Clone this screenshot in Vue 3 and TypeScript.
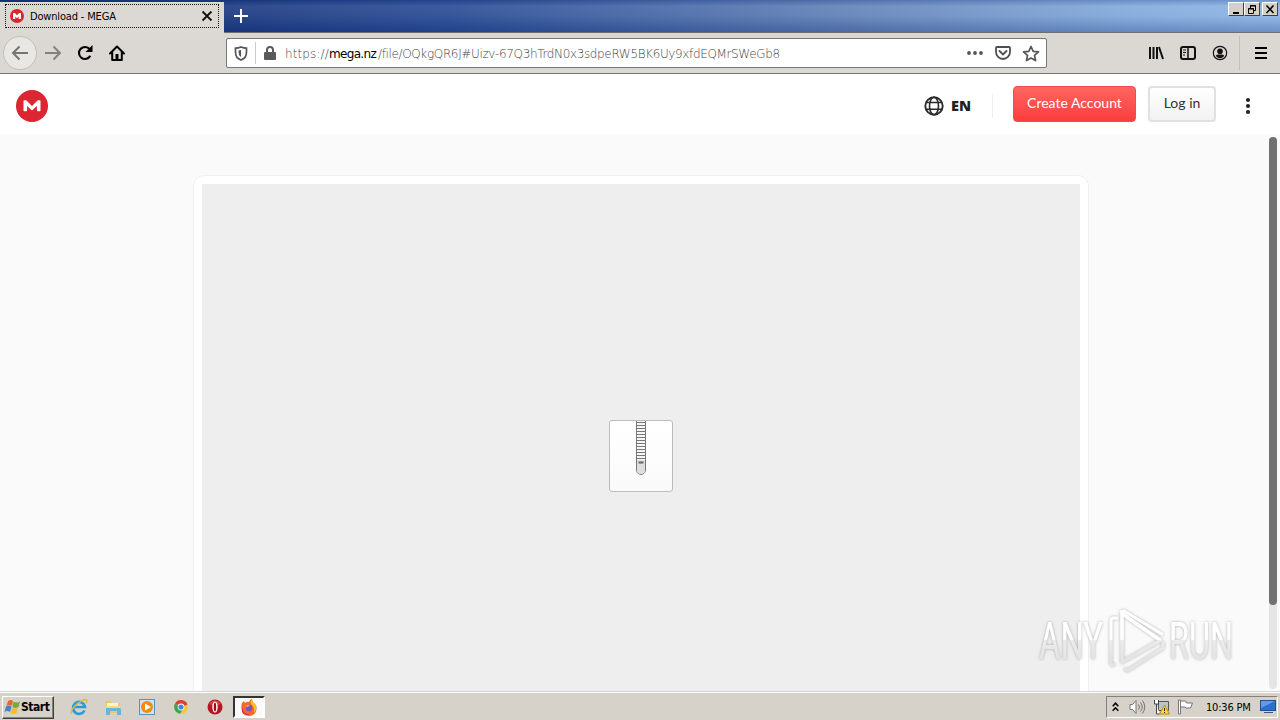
<script setup lang="ts">
const rungs: number[] = Array.from({ length: 13 }, (_, i) => 3 + i * 3)
</script>

<template>
  <div class="screen">
    <div class="titlebar">
      <div class="tab">
        <div class="tab-focus">
          <svg class="tab-logo" viewBox="0 0 32 32"><circle cx="16" cy="16" r="16" fill="#d9272e" /><path d="M7 23V9h4l5 5 5-5h4v14h-5v-6l-4 4-4-4v6z" fill="#fff" /></svg>
          <span class="tab-title">Download - MEGA</span>
          <svg class="tab-close" width="12" height="12" viewBox="0 0 12 12"><path d="M1.5 1.5l9 9M10.5 1.5l-9 9" stroke="#111" stroke-width="1.8" /></svg>
        </div>
      </div>
      <svg class="plus" width="16" height="16" viewBox="0 0 16 16"><path d="M8 1v14M1 8h14" stroke="#fff" stroke-width="2" /></svg>
      <div class="winbtns">
        <div class="winbtn"><svg width="12" height="11"><path d="M3 8h6v2H3z" /></svg></div>
        <div class="winbtn"><svg width="12" height="11"><path d="M4.5 4V1.5h5v5H8M4 2h6M2.5 4.5h5v5h-5zM2 5h6" fill="none" stroke="#000" /></svg></div>
        <div class="winbtn last"><svg width="12" height="11"><path d="M2.5 1.5l7 7.5M9.500 1.500l-7 7.500" stroke="#000" stroke-width="1.6" /></svg></div>
      </div>
    </div>

    <div class="toolbar">
      <div class="back"><svg width="18" height="16" viewBox="0 0 18 16"><path d="M17 8H2M8.500 1.500L2 8l6.500 6.500" fill="none" stroke="#77756f" stroke-width="2" /></svg></div>
      <svg class="fwd" width="18" height="16" viewBox="0 0 18 16"><path d="M1 8h15M9.500 1.500L16 8l-6.500 6.500" fill="none" stroke="#83817c" stroke-width="2" /></svg>
      <svg class="reload" width="16" height="16" viewBox="0 0 16 16"><path d="M13.300 10.800A6 6 0 1 1 12.700 4.200" fill="none" stroke="#000" stroke-width="2.100" /><path d="M15.500 0v7H8.500z" /></svg>
      <svg class="home" width="16" height="16" viewBox="0 0 16 16"><path d="M1 8.500L8 1.500l7 7M3.200 7.500V15h9.600V7.500" fill="none" stroke="#000" stroke-width="2" stroke-linejoin="round" stroke-linecap="round" /><path d="M6.500 9h3v6h-3z" /></svg>
      <div class="urlbar">
        <svg class="shield" width="14" height="15" viewBox="0 0 14 15"><path d="M7 1C5 1.900 3 2.200 1.500 2.200V6c0 4 2 6.800 5.500 8 3.500-1.200 5.500-4 5.500-8V2.200C11 2.200 9 1.900 7 1z" fill="none" stroke="#555" stroke-width="1.700" /><path d="M7 4v7C5 10 4.500 8 4.500 4.500z" fill="#555" /></svg>
        <i class="url-sep"></i>
        <svg class="lock" width="12" height="14" viewBox="0 0 12 14"><path d="M3 7V4a3 3 0 0 1 6 0v3" fill="none" stroke="#5a5a5a" stroke-width="2" /><rect y="6" width="12" height="8" rx="1" fill="#5a5a5a" /></svg>
        <div class="url"><span class="u1">https://</span><span class="u2">mega.nz</span><span class="u3">/file/OQkgQR6J#Uizv-67Q3hTrdN0x3sdpeRW5BK6Uy9xfdEQMrSWeGb8</span></div>
        <svg class="dots" width="16" height="6" viewBox="0 0 16 6" fill="#555"><circle cx="2" cy="3" r="1.900" /><circle cx="8" cy="3" r="1.900" /><circle cx="14" cy="3" r="1.900" /></svg>
        <svg class="pocket" width="16" height="15" viewBox="0 0 16 15" fill="none" stroke="#4f4f4f"><path d="M2 1h12q1 0 1 1v4a7 7 0 0 1-14 0V2q0-1 1-1z" stroke-width="1.800" /><path d="M4.500 5L8 8.500 11.500 5" stroke-width="1.900" stroke-linecap="round" /></svg>
        <svg class="star" width="18" height="17" viewBox="0 0 18 17"><path d="M9 1.500l2.200 4.800 5.300.6-4 3.500 1.100 5.200L9 13l-4.600 2.600 1.100-5.200-4-3.500 5.300-.6z" fill="none" stroke="#555" stroke-width="1.700" stroke-linejoin="round" /></svg>
      </div>
      <div class="tools">
        <svg width="16" height="16" viewBox="0 0 16 16" fill="none" stroke="#111" stroke-width="2"><path d="M2 2v12M5.500 2v12M9 2v12M11 2l4 12" /></svg>
        <svg width="16" height="16" viewBox="0 0 16 16" fill="none" stroke="#111"><rect x="1" y="2" width="14" height="12" rx="2" stroke-width="2" /><path d="M8 2v12" stroke-width="1.500" /><path d="M3 5h3M3 7.500h3M3 10h2" /></svg>
        <svg width="16" height="16" viewBox="0 0 16 16"><circle cx="8" cy="8" r="6.700" fill="none" stroke="#111" stroke-width="1.200" /><circle cx="8" cy="6.200" r="2.800" fill="#111" /><path d="M3.800 10.800q1-1.500 2.700-1.300h3q1.700-.2 2.700 1.300a4.900 4.900 0 0 1-8.400 0z" fill="#111" /></svg>
      </div>
      <i class="tool-sep"></i>
      <svg class="burger" width="12" height="12"><path d="M0 1h12M0 6h12M0 11h12" stroke="#000" stroke-width="2" /></svg>
    </div>

    <header class="site-head">
      <svg class="mega" width="32" height="32" viewBox="0 0 32 32"><circle cx="16" cy="16" r="16" fill="#dc2631" /><path d="M7.500 20.500V11q0-.7.700-.7h2L16 16l5.800-5.700h2q.7 0 .7.700v9.500q0 .8-.7.800h-2.100q-.8 0-.8-.8v-4.600L16 20.600l-4.900-4.700v4.600q0 .8-.8.800H8.200q-.7 0-.7-.8z" fill="#fff" /></svg>
      <svg class="globe" width="20" height="20" viewBox="0 0 20 20" fill="none" stroke="#2b2b2b" stroke-width="1.600"><circle cx="10" cy="10" r="8.700" stroke-width="1.900" /><ellipse cx="10" cy="10" rx="4.500" ry="8.700" /><path d="M2.300 6.500h15.400M2.300 13.200h15.400" /></svg>
      <span class="lang">EN</span>
      <i class="head-sep"></i>
      <button class="btn create">Create Account</button>
      <button class="btn login">Log in</button>
      <svg class="more" width="6" height="18" fill="#222"><circle cx="3" cy="3" r="2.100" /><circle cx="3" cy="9" r="2.100" /><circle cx="3" cy="15" r="2.100" /></svg>
    </header>

    <main class="content">
      <div class="card">
        <div class="preview">
          <svg class="zip" width="64" height="72" viewBox="0 0 64 72">
            <defs><linearGradient id="paper" x2="0" y2="1"><stop stop-color="#fff" /><stop offset="1" stop-color="#fafafa" /></linearGradient></defs>
            <rect x=".5" y=".5" width="63" height="71" rx="2.500" fill="url(#paper)" stroke="#bcbcbc" />
            <path d="M27.500 1v49a4.500 4.500 0 0 0 9 0V1" fill="#f6f6f6" stroke="#777" />
            <path v-for="y in rungs" :key="y" :d="`M28 ${y - 0.5}h8`" stroke="#777" />
            <path d="M28 40h8v10a4 4 0 0 1-8 0z" fill="#dedede" />
            <path d="M29.500 41.500h5v2h-5z" fill="#666" />
          </svg>
        </div>
      </div>
      <div class="scroll"><div class="thumb"></div></div>
      <svg class="watermark" width="210" height="78" viewBox="0 0 210 78">
        <defs>
          <linearGradient id="shine" x1="0" y1="15" x2="0" y2="56" gradientUnits="userSpaceOnUse"><stop stop-color="#fff" /><stop offset=".57" stop-color="#fff" /><stop offset=".59" stop-color="#ececec" /><stop offset="1" stop-color="#e4e4e4" /></linearGradient>
          <filter id="soft" x="-10%" y="-10%" width="120%" height="120%"><feDropShadow dx="0" dy="0" stdDeviation="1.800" flood-color="#777" flood-opacity=".6" /></filter>
        </defs>
        <g filter="url(#soft)" fill="url(#shine)">
          <text x="5" y="58" textLength="64" lengthAdjust="spacingAndGlyphs">ANY</text>
          <text x="135" y="58" textLength="64" lengthAdjust="spacingAndGlyphs">RUN</text>
          <g fill="none" stroke="url(#shine)" stroke-linejoin="round" stroke-linecap="round"><path d="M88 12.500v48.500l38.500-21.500z" stroke-width="3.500" /><path d="M83 17h-3q-3 0-3 3v42q0 3 3 1.500M87 11l3-1 38 23M91 68q2 3 5 0l33-21v-5" stroke-width="3" /></g>
        </g>
      </svg>
    </main>

    <footer class="taskbar">
      <div class="start">
        <svg width="17" height="16" viewBox="0 0 17 16"><path d="M4 2q3-2 5 0L8 7Q5 5 2.500 7z" fill="#e66a27" /><path d="M9.500 2.500q3 2 6.500 0L14.500 8q-3 2-6 0z" fill="#6fae34" /><path d="M2 7.500q3-2 5.500 0L6 13q-3-2-5.500 0z" fill="#3d86ca" /><path d="M8 8.500q3 2 6 0l-1.500 5.500q-3 2-6 0z" fill="#f5bd2b" /></svg>
        <b>Start</b>
      </div>
      <div class="quick">
        <svg width="18" height="18" viewBox="0 0 18 18" fill="none"><path d="M14.500 12.500A6 6 0 1 1 15 9H4" stroke="#2b9bd6" stroke-width="2.600" /><path d="M2 16q-3-2 3-8T16 1.500q2 1 0 4" stroke="#e3b83b" stroke-width="1.300" /></svg>
        <svg width="18" height="18" viewBox="0 0 18 18"><path d="M2 3h5l1 2h8v10H2z" fill="#e8c964" /><path d="M3 5h11v5H3z" fill="#fff4bd" /><path d="M2 9h14l1 3v5h-4v-4H6v4H2z" fill="#69b6d8" /><path d="M2 8h14v2H2z" fill="#f6dd84" /></svg>
        <svg width="18" height="18" viewBox="0 0 18 18"><rect x="1.500" y="1.500" width="15" height="15" fill="#cfe3f3" stroke="#5792c4" /><circle cx="9" cy="9" r="6" fill="#f28a18" /><path d="M7 5.500v7l6-3.500z" fill="#fff" /></svg>
        <svg width="18" height="18" viewBox="0 0 18 18"><circle cx="9" cy="9" r="6.800" fill="#f4c830" /><path d="M9 9L3 5.500a7 7 0 0 1 12.500 1z" fill="#dd4032" /><path d="M9 9L3 5.500A7 7 0 0 0 8 15.700l3-4.700z" fill="#35a652" /><circle cx="9" cy="9" r="3.400" fill="#fff" /><circle cx="9" cy="9" r="2.600" fill="#4284e8" /></svg>
        <svg width="18" height="18" viewBox="0 0 18 18"><circle cx="9" cy="9" r="7.500" fill="#b61520" /><path d="M3 6a7 7 0 0 1 12 0q-6 3-12 0z" fill="#d53f47" /><ellipse cx="9" cy="9" rx="2.700" ry="5.500" fill="#fff" /><ellipse cx="9" cy="9" rx="1.200" ry="4.500" fill="#9d0d18" /></svg>
      </div>
      <div class="active-app"><svg width="18" height="18" viewBox="0 0 18 18"><path d="M2 5l2-2 1 2q2-2 4-1 1-3 3-3 0 3 3 5 2 2 1.500 5a7.500 7 0 0 1-15 0Q1 8 2 5z" fill="#f36b24" /><path d="M12 1q0 3 3 5 3 5-1 9 1-6-3-9-1-2 1-5z" fill="#fbc12b" /><path d="M2 10q2 6 8 6.500-6 2-8-3z" fill="#e32b57" /><circle cx="9" cy="10" r="3.200" fill="#7c50cf" /><path d="M5 8q2-2 5-1l-2 2q-2 0-3-1z" fill="#ff9b28" /></svg></div>
      <div class="tray">
        <svg class="chev" width="7" height="10" viewBox="0 0 7 10" fill="none" stroke="#000" stroke-width="1.500"><path d="M.7 4.200l2.800-3 2.800 3M.7 8.800l2.800-3 2.800 3" /></svg>
        <svg class="vol" width="17" height="16" viewBox="0 0 17 16" stroke="#777"><path d="M1 5.500h2.500L7 1.500v13l-3.500-4H1z" fill="#fff" /><path d="M9.500 5.500q2 2.500 0 5M11.500 3.500q3.500 4.500 0 9M13.500 1.500q4.500 6.500 0 13" fill="none" /></svg>
        <svg class="net" width="17" height="16" viewBox="0 0 17 16"><path d="M5.500 2.500h10v9h-10z" fill="#bbc4cc" stroke="#555" /><path d="M1.500 1v4h4V1M3.500 5v10h3" fill="#fff" stroke="#444" /><path d="M7 14.500h4" stroke="#444" /><path d="M11.500 6L16.500 15h-10z" fill="#ffdc28" stroke="#b38e15" /><path d="M11.500 9v3M11.500 13v1" stroke="#222" /></svg>
        <svg class="flag" width="17" height="16" viewBox="0 0 17 16"><path d="M1.500 1v14h2V1zM3.500 2h5l1 2h6l-2 5H9L8 8H3.500z" fill="#fff" stroke="#777" /></svg>
        <span class="clock">10:36 PM</span>
        <svg class="desk" width="16" height="14" viewBox="0 0 16 14"><rect x=".5" y=".5" width="15" height="10" fill="#2871d1" stroke="#234f8a" /><path d="M1 1h14L1 8z" fill="#629ce4" /><path d="M4 12h9v1H4z" fill="#3c587b" /></svg>
      </div>
    </footer>
  </div>
</template>

<style>
body { margin: 0; overflow: hidden; }
</style>

<style scoped>
* { box-sizing: border-box; }
svg { display: block; flex: none; }
.screen { width: 1280px; height: 720px; display: flex; flex-direction: column; overflow: hidden; background: #fff; font-family: "DejaVu Sans Condensed", "DejaVu Sans", sans-serif; color: #000; }
.titlebar { height: 33px; flex: none; display: flex; background: linear-gradient(180deg, #0a246a33 0, #ffffff18 20%, #ffffff10 50%, #0a246a40 100%), linear-gradient(90deg, #102f7c 0, #1b3980 220px, #294b94 450px, #6282b8 850px, #82a9db 1130px, #8db4e5 1280px); border-bottom: 1px solid #6d6f71; }
.tab { width: 224px; height: 33px; padding: 2px 3px 4px 5px; margin-top: 2px; background: #dcd9d4; }
.tab-focus { display: flex; align-items: center; height: 24px; width: 214px; border: 1px dotted #111; padding-left: 4px; }
.tab-logo { width: 14px; height: 14px; }
.tab-title { font-size: 11px; margin-left: 6px; width: 171px; white-space: nowrap; letter-spacing: -.17px; }
.tab-close { flex: none; }
.plus { margin: 8px 0 0 9px; }
.winbtns { display: flex; margin: 2px 2px 0 auto; }
.winbtn { width: 16px; height: 14px; padding: 1px; background: #d4d0c8; border: 1px solid; border-color: #fff #404040 #404040 #fff; }
.winbtn.last { margin-left: 2px; }
.toolbar { height: 41px; flex: none; display: flex; align-items: center; background: #dbd8d3; border-bottom: 1px solid #777; }
.back { width: 34px; height: 34px; margin-left: 3px; border-radius: 50%; border: 1px solid #c2bfba; background: #e9e7e3; display: grid; place-items: center; }
.fwd { margin-left: 7px; }
.reload { margin-left: 15px; }
.home { margin-left: 16px; }
.urlbar { width: 821px; height: 30px; margin-left: 101px; display: flex; align-items: center; border: 1px solid #777; border-radius: 2px; background: #fff; }
.shield { margin-left: 7px; }
.url-sep { width: 1px; height: 22px; background: #ccc; margin-left: 7px; }
.lock { margin-left: 8px; }
.url { margin: 2px 0 0 9px; width: 682px; font-family: "DejaVu Sans", sans-serif; font-weight: 200; font-size: 12px; color: #444; white-space: nowrap; display: flex; }
.u1 { width: 44px; letter-spacing: .1px; }
.u2 { width: 49px; color: #000; font-weight: 400; letter-spacing: -.68px; }
.u3 { letter-spacing: -.36px; }
.pocket { margin-left: 12px; }
.star { margin-left: 11px; }
.tools { display: flex; gap: 16px; margin-left: 101px; }
.tool-sep { height: 34px; width: 1px; background: #c3c0bb; margin-left: 11px; }
.burger { margin-left: 15px; }
.site-head { height: 60px; flex: none; display: flex; align-items: center; padding: 4px 0 0 16px; font-family: Lato, sans-serif; background: #fff; }
.globe { margin: -1px 0 0 876px; }
.lang { width: 22px; margin: -2px 0 0 7px; font: 800 14.500px "Open Sans", sans-serif; color: #222; }
.head-sep { width: 1px; height: 24px; margin-left: 19px; background: #eee; }
.btn { height: 36px; margin: -4px 0 0; padding: 0 0 3px; border-radius: 4px; font: 14px Lato, sans-serif; }
.create { width: 123px; margin-left: 20px; color: #fff; border: 1px solid #f34c4b; background: linear-gradient(#ff6660, #fb3d3f); letter-spacing: 0; }
.login { width: 68px; margin-left: 12px; color: #333; background: linear-gradient(#fff, #f2f2f2); border: 2px solid #e1e1e1; }
.more { margin-left: 29px; }
.content { position: relative; height: 557px; flex: none; display: flex; justify-content: flex-end; padding-top: 41px; background: #fafafa; overflow: hidden; }
.card { width: 896px; height: 530px; padding: 8px; border: 1px solid #f0f0f0; border-radius: 11px; background: #fff; }
.preview { height: 520px; padding-top: 236px; background: #eee; display: flex; justify-content: center; align-items: flex-start; }
.scroll { width: 8px; height: 552px; margin: -38px 3px 0 180px; background: #e5e5e5; border-radius: 4px; }
.thumb { height: 468px; background: #717171; border-radius: 4px; }
.watermark { position: absolute; left: 1034px; top: 467px; overflow: visible; font: 400 51px Roboto, sans-serif; }
.taskbar { height: 29px; flex: none; display: flex; align-items: center; padding: 2px 2px 0; background: #d6d1c9; border-top: 1px solid #d7d4ce; box-shadow: inset 0 1px #fff; }
.start { display: flex; align-items: center; width: 52px; height: 23px; padding-left: 1px; border: 1px solid; border-color: #fff #404040 #404040 #fff; box-shadow: inset -1px -1px #858279; }
.start b { font-size: 12px; letter-spacing: -.45px; }
.quick { display: flex; gap: 16px; margin-left: 16px; }
.active-app { width: 32px; height: 22px; margin-left: 9px; display: grid; place-items: center; background: #fafafa; border: 2px solid; border-color: #333 #fff #fff #333; }
.tray { margin-left: auto; width: 172px; height: 22px; display: flex; align-items: center; border: 1px solid; border-color: #85827b #fff #fff #85827b; }
.chev { margin-left: 5px; }
.vol { margin-left: 10px; }
.net { margin-left: 7px; }
.flag { margin-left: 7px; }
.clock { width: 47px; margin-left: 12px; font-size: 11px; white-space: nowrap; letter-spacing: -.2px; }
.desk { margin-left: 7px; }
</style>
